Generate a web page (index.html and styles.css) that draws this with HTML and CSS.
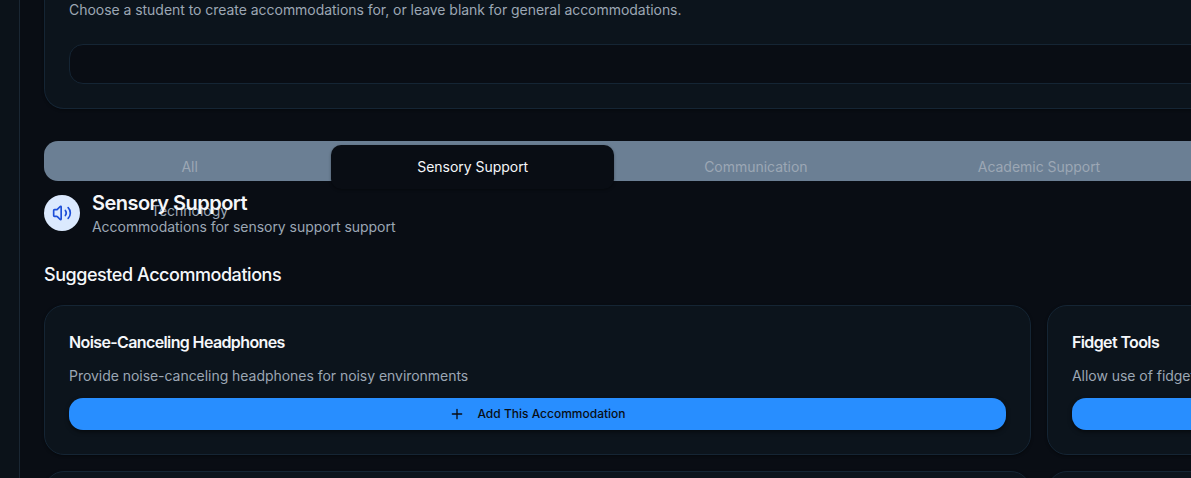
FILE: index.html
```
<!DOCTYPE html>
<html lang="en">
<head>
<meta charset="utf-8">
<title>Accommodations</title>
<link rel="stylesheet" href="styles.css">
</head>
<body>
<div class="app">
  <aside class="sidebar"></aside>
  <main class="main">
    <div class="content">
      <section class="card picker">
        <p class="text">Choose a student to create accommodations for, or leave blank for general accommodations.</p>
        <div class="select"></div>
      </section>
      <nav class="tabs">
        <button class="tab">All</button>
        <button class="tab active">Sensory Support</button>
        <button class="tab">Communication</button>
        <button class="tab">Academic Support</button>
        <button class="tab"></button>
        <button class="tab"></button>
        <button class="tab"></button>
        <button class="tab">Technology</button>
      </nav>
      <header class="category">
        <div class="badge">
          <svg class="icon-volume" viewBox="0 0 24 24"><path d="M11 4.702a.705.705 0 0 0-1.203-.498L6.413 7.587A1.4 1.4 0 0 1 5.416 8H3a1 1 0 0 0-1 1v6a1 1 0 0 0 1 1h2.416a1.4 1.4 0 0 1 .997.413l3.383 3.384A.705.705 0 0 0 11 19.298z"/><path d="M16 9a5 5 0 0 1 0 6"/><path d="M19.364 18.364a9 9 0 0 0 0-12.728"/></svg>
        </div>
        <div>
          <h2 class="category-title">Sensory Support</h2>
          <p class="text">Accommodations for sensory support support</p>
        </div>
      </header>
      <h3 class="section-title">Suggested Accommodations</h3>
      <div class="grid">
        <article class="card">
          <h4 class="card-title">Noise-Canceling Headphones</h4>
          <p class="text">Provide noise-canceling headphones for noisy environments</p>
          <button class="add"><svg class="icon-plus" viewBox="0 0 24 24"><path d="M5 12h14M12 5v14"/></svg><span class="add-label">Add This Accommodation</span></button>
        </article>
        <article class="card">
          <h4 class="card-title">Fidget Tools</h4>
          <p class="text">Allow use of fidget tools</p>
          <button class="add"></button>
        </article>
        <article class="card"></article>
        <article class="card"></article>
      </div>
    </div>
  </main>
</div>
</body>
</html>
```
FILE: styles.css
```
* { box-sizing: border-box; margin: 0; }
body { background: #090d14; font-family: Inter, "Liberation Sans", sans-serif; color: #f5f7fa; }
button { font: inherit; border: 0; padding: 0; background: none; }
svg { fill: none; stroke: currentColor; stroke-width: 2; stroke-linecap: round; stroke-linejoin: round; }
.app { display: flex; width: 1191px; height: 478px; overflow: hidden; }
.sidebar { flex: none; width: 20px; background: #0b1219; border-right: 1px solid #1a2733; }
.main { flex: 1; min-width: 0; padding: 0 24px; }
.content { width: 1990px; }
.card { height: 150px; padding: 24px; border: 1px solid #152534; border-radius: 20px; background: #0c141c; box-shadow: 0 1px 3px rgba(0,0,0,.4); }
.picker { height: 109px; padding-top: 0; border-top: 0; border-radius: 0 0 20px 20px; }
.text { font-size: 14px; line-height: 20px; letter-spacing: -.04px; color: #9ca7b4; white-space: nowrap; }
.select { height: 40px; margin-top: 24px; border: 1px solid #152534; border-radius: 14px; background: #090d14; }
.tabs { display: grid; grid-template-columns: repeat(7, 1fr); grid-auto-rows: 44px; height: 40px; margin-top: 32px; padding: 4px; border-radius: 14px; background: #6b7f94; }
.tab { border-radius: 10px; font-size: 14px; line-height: 20px; letter-spacing: -.03px; color: #9ca7b4; }
.active { background: #090d14; color: #f5f7fa; box-shadow: 0 1px 3px rgba(0,0,0,.35); }
.category { display: flex; align-items: center; gap: 12px; height: 48px; margin-top: 8px; }
.badge { display: grid; place-items: center; width: 36px; height: 36px; border-radius: 50%; background: #dbe9fe; color: #1d4ed8; }
.icon-volume { width: 20px; height: 20px; }
.category-title { font-size: 20px; line-height: 28px; font-weight: 600; letter-spacing: -.53px; }
.section-title { margin-top: 24px; font-size: 18px; line-height: 28px; font-weight: 500; letter-spacing: -.45px; }
.grid { display: grid; grid-template-columns: 1fr 1fr; gap: 16px; margin-top: 16px; }
.card-title { margin-bottom: 12px; font-size: 16px; line-height: 24px; font-weight: 600; letter-spacing: -.62px; }
.add { display: flex; align-items: center; justify-content: center; gap: 12px; width: 100%; height: 32px; margin-top: 12px; border-radius: 14px; background: #288eff; color: #090d14; font-size: 12px; font-weight: 500; box-shadow: 0 2px 4px rgba(0,0,0,.5); }
.add-label { padding-bottom: 2px; }
.icon-plus { width: 16px; height: 16px; }
```
